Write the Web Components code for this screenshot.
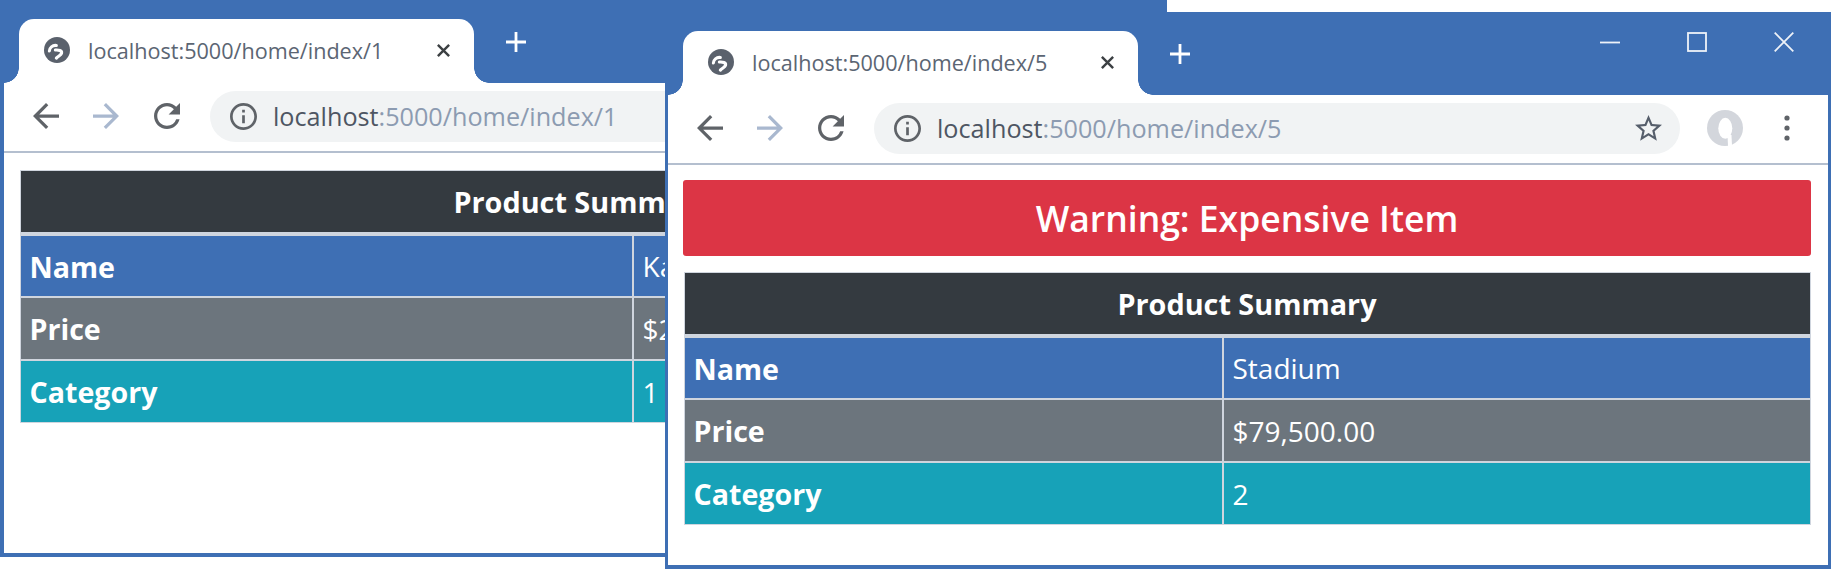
<!DOCTYPE html>
<html lang="en"><head><meta charset="utf-8"><title>Two browser windows</title>
<style>
html,body{margin:0;height:100%;background:#fff;overflow:hidden;font-family:"Open Sans","Noto Sans",sans-serif}
desktop-stage{--blue:#3e6fb4}
</style></head><body>
<desktop-stage>
  <browser-window url="localhost:5000/home/index/1" style="--x:1px;--y:0px;--z:1;--edge:-1px 0 0 #3e6fb4;--pad-top:17px">
    <product-summary name="Kayak" price="$275.00" category="1" style="--col:611px"></product-summary>
  </browser-window>
  <browser-window url="localhost:5000/home/index/5" style="--x:665px;--y:12px;--z:2;--pad-top:15px">
    <alert-banner>Warning: Expensive Item</alert-banner>
    <product-summary name="Stadium" price="$79,500.00" category="2" style="--col:537px"></product-summary>
  </browser-window>
</desktop-stage>
<script>
const ICONS={
 back:['4 4 16 16','<path d="M20 11H7.83l5.59-5.59L12 4l-8 8 8 8 1.41-1.41L7.83 13H20v-2z"/>'],
 forward:['4 4 16 16','<path d="M4 11h12.17l-5.59-5.59L12 4l8 8-8 8-1.41-1.41L16.17 13H4v-2z"/>'],
 reload:['4 4 16 16','<path d="M17.65 6.35A7.958 7.958 0 0 0 12 4c-4.42 0-7.99 3.58-7.99 8s3.57 8 7.99 8c3.73 0 6.84-2.55 7.73-6h-2.08A5.99 5.99 0 0 1 12 18c-3.31 0-6-2.69-6-6s2.69-6 6-6c1.66 0 3.14.69 4.22 1.78L13 11h7V4l-2.35 2.35z"/>'],
 info:['2 2 20 20','<path d="M11 7h2v2h-2zm0 4h2v6h-2zm1-9C6.48 2 2 6.48 2 12s4.48 10 10 10 10-4.48 10-10S17.52 2 12 2zm0 18c-4.41 0-8-3.59-8-8s3.59-8 8-8 8 3.59 8 8-3.59 8-8 8z"/>'],
 star:['2 2 20 20','<path d="M22 9.24l-7.19-.62L12 2 9.19 8.63 2 9.24l5.46 4.73L5.82 21 12 17.27 18.18 21l-1.63-7.03L22 9.24zM12 15.4l-3.76 2.27 1-4.28-3.32-2.88 4.38-.38L12 6.1l1.71 4.04 4.38.38-3.32 2.88 1 4.28L12 15.4z"/>'],
 globe:['0 0 16 16','<circle cx="8" cy="8" r="8"/><path d="M3.3 8.6C3.4 6.6 5.2 4.9 7.6 5.2M7 8C9 7.8 11.2 8.4 10.8 10 10.4 11.4 8.8 11.6 7.6 13" fill="none" stroke="#fff" stroke-width="1.9" stroke-linecap="round"/>'],
 close:['0 0 16 16','<path d="M2 2l12 12M14 2L2 14" fill="none" stroke="currentColor" stroke-width="2.6"/>'],
 plus:['0 0 22 22','<path d="M11 1v20M1 11h20" fill="none" stroke="currentColor" stroke-width="2.8"/>'],
 min:['0 0 20 20','<path d="M0 10.5h20" fill="none" stroke="currentColor" stroke-width="1.8"/>'],
 max:['0 0 20 20','<rect x="1" y="1" width="18" height="18" fill="none" stroke="currentColor" stroke-width="1.8"/>'],
 x:['0 0 20 20','<path d="M.7.7l18.6 18.6M19.3.7L.7 19.3" fill="none" stroke="currentColor" stroke-width="1.8"/>'],
 avatar:['0 0 36 36','<circle cx="18" cy="18" r="18" fill="#d3d6dc"/><ellipse cx="18.3" cy="18.3" rx="7" ry="10.5" fill="#fff"/><path d="M20.5 25h4l.5 11h-4z" fill="#fff"/>'],
 dots:['0 0 6 26','<circle cx="3" cy="3" r="2.6"/><circle cx="3" cy="13" r="2.6"/><circle cx="3" cy="23" r="2.6"/>']
};
class El extends HTMLElement{
  render(html){this.attachShadow({mode:'open'}).innerHTML=html}
}
customElements.define('ui-icon',class extends El{connectedCallback(){
  const [vb,body]=ICONS[this.getAttribute('name')];
  this.render(`<style>:host{display:block;width:var(--s,24px);height:var(--s,24px);color:inherit;flex:none}svg{display:block;width:100%;height:100%;fill:currentColor}</style><svg viewBox="${vb}" aria-hidden="true">${body}</svg>`);
}});
customElements.define('desktop-stage',class extends El{connectedCallback(){
  this.render(`<style>:host{display:block;position:relative;width:1831px;height:569px;overflow:hidden;background:#fff}</style><slot></slot>`);
}});
customElements.define('window-tab',class extends El{connectedCallback(){
  this.render(`<style>
  :host{display:flex;align-items:center;position:relative;box-sizing:border-box;width:455px;height:64px;margin-left:15px;padding:0 0 2px 25px;background:#fff;border-radius:15px 15px 0 0;color:#5f6368;align-self:flex-end;flex:none}
  :host::before,:host::after{content:"";position:absolute;bottom:0;width:15px;height:15px}
  :host::before{left:-15px;background:radial-gradient(circle at 0 0,transparent 14.5px,#fff 15px)}
  :host::after{right:-15px;background:radial-gradient(circle at 100% 0,transparent 14.5px,#fff 15px)}
  span{margin-left:18px;font-size:21.6px;color:#5b6573;white-space:nowrap;width:348px}
  .g{--s:26px;color:#5a616c}.c{--s:15px;color:#3c4043}
  </style><ui-icon class="g" name="globe"></ui-icon><span><slot></slot></span><ui-icon class="c" name="close"></ui-icon>`);
}});
customElements.define('title-bar',class extends El{connectedCallback(){
  this.render(`<style>
  :host{display:flex;height:83px;background:var(--blue);color:#fff;flex:none}
  .plus{--s:22px;margin:31px 0 0 31px;align-self:flex-start}
  .ctl{margin-left:auto;display:flex;padding-right:1px}
  .ctl div{width:87px;height:60px;display:flex;align-items:center;justify-content:center;color:#eef2f8;--s:20px}
  </style><window-tab><slot></slot></window-tab><ui-icon class="plus" name="plus"></ui-icon>
  <div class="ctl"><div><ui-icon name="min"></ui-icon></div><div><ui-icon name="max"></ui-icon></div><div><ui-icon name="x"></ui-icon></div></div>`);
}});
customElements.define('omni-box',class extends El{connectedCallback(){
  const u=this.getAttribute('url'),i=u.indexOf(':');
  this.render(`<style>
  :host{display:flex;align-items:center;box-sizing:border-box;width:806px;height:51px;margin-left:13px;padding:0 18px 0 20px;border-radius:26px;background:#f1f3f4;flex:none}
  .i{--s:27px;color:#5f6368}.s{--s:27px;color:#565e6b;margin-left:auto}
  span{margin-left:16px;font-size:25.2px;white-space:nowrap;color:#8c9bb1}b{font-weight:400;color:#4e5663}
  </style><ui-icon class="i" name="info"></ui-icon><span><b>${u.slice(0,i)}</b>${u.slice(i)}</span><ui-icon class="s" name="star"></ui-icon>`);
}});
customElements.define('nav-toolbar',class extends El{connectedCallback(){
  this.render(`<style>
  :host{display:flex;align-items:center;box-sizing:border-box;height:70px;padding:0 0 2px 12px;background:#fff;border-bottom:2px solid #b4bfcf;flex:none}
  .b{width:60px;display:flex;justify-content:center;--s:26px;color:#5f6368;flex:none}
  .f{color:#a9b8cf}.r{margin-left:1px}
  .a{--s:36px;margin-left:27px}.d{--s:auto;margin-left:41px;color:#5f6368}
  .d ui-icon{width:6px;height:26px}
  </style>
  <div class="b"><ui-icon name="back"></ui-icon></div><div class="b f"><ui-icon name="forward"></ui-icon></div><div class="b r"><ui-icon name="reload"></ui-icon></div>
  <omni-box url="${this.getAttribute('url')}"></omni-box>
  <ui-icon class="a" name="avatar"></ui-icon><div class="d"><ui-icon name="dots"></ui-icon></div>`);
}});
customElements.define('browser-window',class extends El{connectedCallback(){
  const u=this.getAttribute('url');
  this.render(`<style>
  :host{position:absolute;left:var(--x);top:var(--y);z-index:var(--z);width:1166px;height:557px;box-sizing:border-box;display:flex;flex-direction:column;background:#fff;border:solid var(--blue);border-width:0 3px 4px 3px;box-shadow:var(--edge,none)}
  main{flex:1;display:flex;flex-direction:column;padding:var(--pad-top) 17px 0 15px;min-height:0}
  </style><title-bar>${u}</title-bar><nav-toolbar url="${u}"></nav-toolbar><main><slot></slot></main>`);
}});
customElements.define('alert-banner',class extends El{connectedCallback(){
  this.render(`<style>
  :host{display:flex;align-items:center;justify-content:center;box-sizing:border-box;height:76px;margin-bottom:16px;background:#dc3545;color:#fff;border-radius:3px;font-size:35.5px;font-weight:600;flex:none}
  </style><slot></slot>`);
}});
customElements.define('summary-row',class extends El{connectedCallback(){
  this.render(`<style>
  :host{display:contents}
  div{background:var(--bg);color:#fff;height:var(--h,60px);display:flex;align-items:center;padding-left:9px;font-size:28px;white-space:nowrap;overflow:hidden}
  .k{font-weight:700;font-size:28.6px}
  </style><div class="k">${this.getAttribute('label')}</div><div><slot></slot></div>`);
}});
customElements.define('product-summary',class extends El{connectedCallback(){
  const g=n=>this.getAttribute(n);
  this.render(`<style>
  :host{display:grid;grid-template-columns:var(--col) 1fr;gap:2px;margin:0 0 0 .5px;padding:1px;background:#cfd5de;flex:none;width:1125px}
  .h{grid-column:1/-1;height:61px;margin-bottom:2px;background:#343a40;color:#fff;font-weight:700;font-size:28.8px;display:flex;align-items:center;justify-content:center}
  </style><div class="h">Product Summary</div>
  <summary-row label="Name" style="--bg:#3e6fb4">${g('name')}</summary-row>
  <summary-row label="Price" style="--bg:#6c757d;--h:61px">${g('price')}</summary-row>
  <summary-row label="Category" style="--bg:#17a2b8;--h:61px">${g('category')}</summary-row>`);
}});
</script>
</body></html>
